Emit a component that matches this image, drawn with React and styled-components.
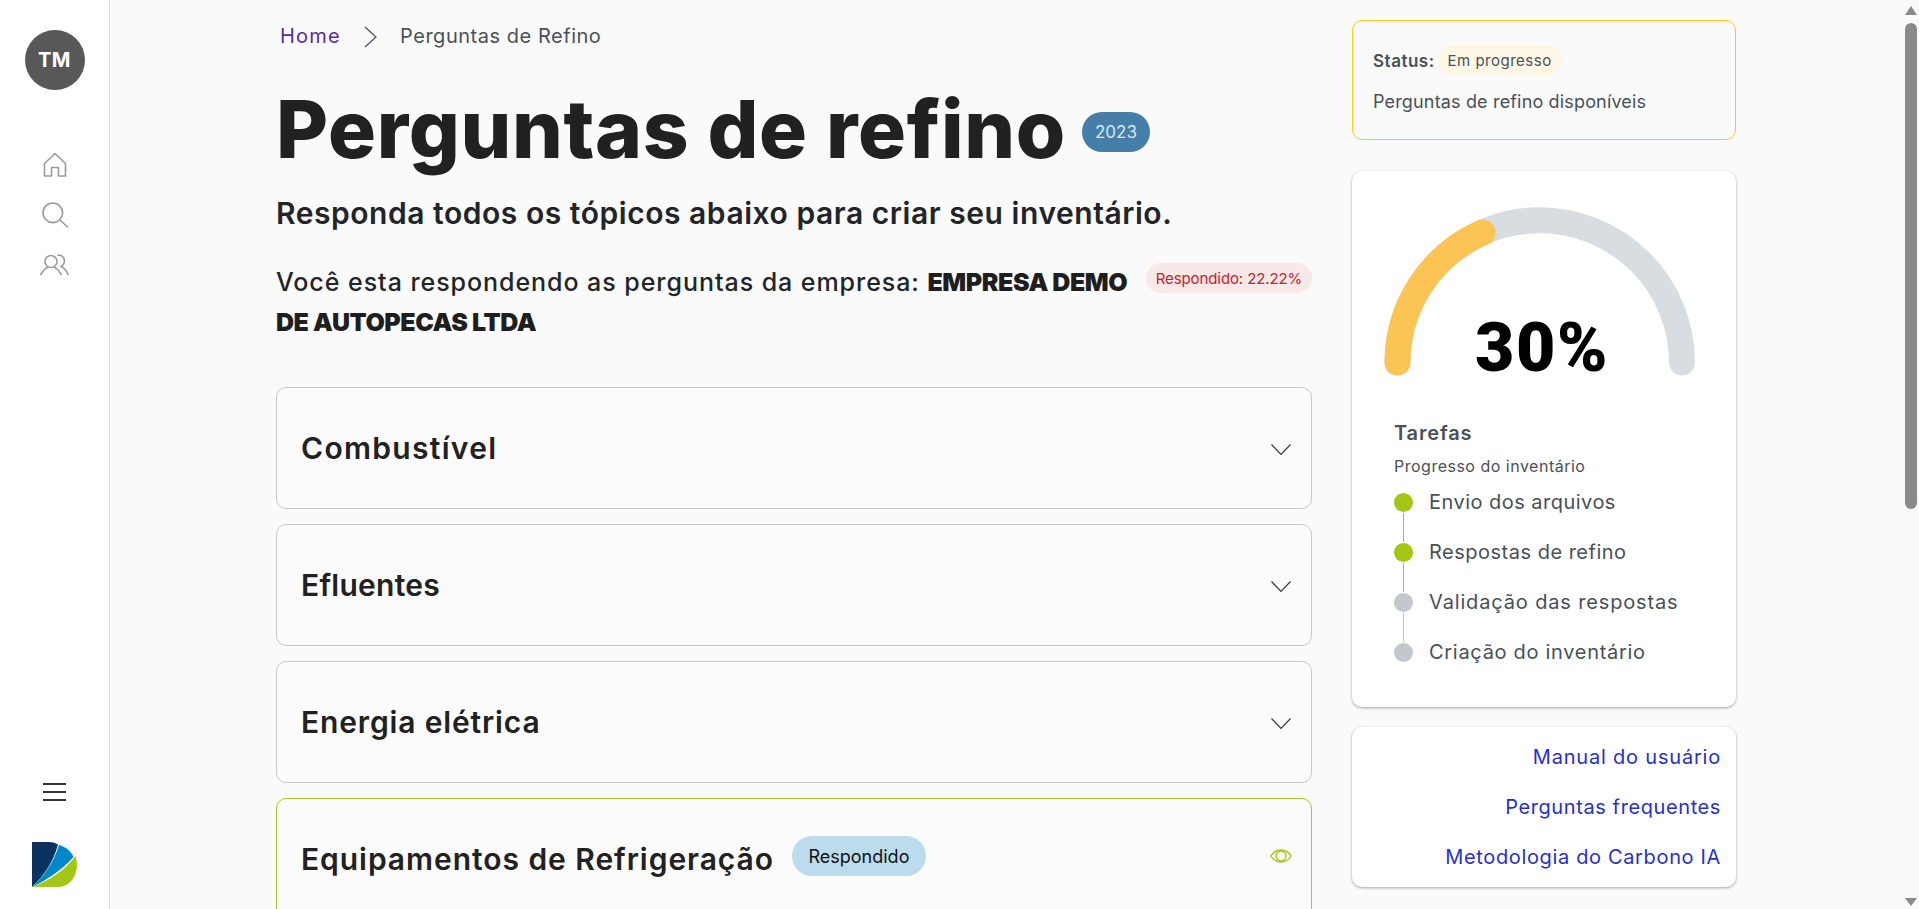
import React from "react";
import styled, { createGlobalStyle } from "styled-components";

const Global = createGlobalStyle`
  * { box-sizing: border-box; }
  html, body { margin: 0; height: 100%; overflow: hidden; }
  body { font-family: Inter, "Noto Sans", "Liberation Sans", sans-serif; background: #fafafa; color: #212121; }
`;

const Page = styled.div`display: flex; height: 909px; overflow: hidden; background: #fafafa;`;

const Sidebar = styled.nav`
  width: 110px; flex: none; height: 100%; background: #fff; border-right: 1px solid #dcdcdc;
  display: flex; flex-direction: column; align-items: center; padding: 30px 0 22px;
`;
const Avatar = styled.div`
  width: 60px; height: 60px; border-radius: 50%; background: #585858; color: #fff;
  font-weight: 700; font-size: 20px; letter-spacing: 0.5px; display: flex; align-items: center; justify-content: center;
`;
const NavIcons = styled.div`display: flex; flex-direction: column; align-items: center; gap: 20px; margin-top: 60px;`;
const NavIcon = styled.svg`display: block; width: 30px; height: 30px; fill: none; stroke: #9a9a9a; stroke-width: 1.6; stroke-linecap: round; stroke-linejoin: round;`;
const SidebarBottom = styled.div`margin-top: auto; display: flex; flex-direction: column; align-items: center; gap: 41px;`;
const Burger = styled.div`
  width: 23px; height: 18px; display: flex; flex-direction: column; justify-content: space-between;
  margin-left: -1px;
  span { display: block; height: 2px; background: #333; }
`;

const Content = styled.main`flex: 1; min-width: 0; display: flex; gap: 40px; padding-left: 166px; align-items: flex-start;`;
const LeftCol = styled.section`width: 1036px; flex: none; padding-top: 20px;`;
const Breadcrumb = styled.div`display: flex; align-items: center; height: 32px; padding-left: 4px; font-size: 20px; color: #495057;`;
const Crumb = styled.a`color: #5b2a9d; letter-spacing: 1.2px; width: 60px;`;
const CrumbSep = styled.svg`width: 14px; height: 22px; margin: 1px 22px 0 24px; fill: none; stroke: #495057; stroke-width: 1.2;`;
const CrumbCurrent = styled.span`letter-spacing: 0.53px;`;

const TitleRow = styled.div`display: flex; align-items: center; margin-top: 27px; height: 100px;`;
const Title = styled.h1`margin: 0; font-size: 80px; line-height: 100px; font-weight: 800; letter-spacing: 0.65px; color: #212121;`;
const YearBadge = styled.span`
  margin-left: 16px; margin-top: 6px; width: 68px; height: 40px; border-radius: 20px; background: #457fa9; color: #d6e6f2;
  font-size: 17px; display: flex; align-items: center; justify-content: center;
`;
const Subtitle = styled.h2`margin: 12px 0 0; font-size: 30px; line-height: 44px; font-weight: 600; color: #212529; letter-spacing: 0.54px;`;
const CompanyRow = styled.div`display: flex; align-items: flex-start; justify-content: space-between; margin-top: 27px;`;
const CompanyText = styled.p`margin: 0; width: 860px; font-size: 25px; line-height: 40px; font-weight: 550; color: #212529; letter-spacing: 0.95px;`;
const CompanyName = styled.strong`font-weight: 900; letter-spacing: -0.45px; color: #1e1e1e;`;
const ProgressPill = styled.span`
  width: 166px; height: 30px; margin-top: 1px; border-radius: 15px; background: #f8e8e8; color: #c0242c;
  font-size: 15px; letter-spacing: -0.1px; display: flex; align-items: center; justify-content: center; white-space: nowrap;
`;

const Accordions = styled.div`display: flex; flex-direction: column; gap: 15px; margin-top: 45px;`;
const Accordion = styled.article`
  height: 122px; flex: none; border: 1px solid ${p => (p.$done ? "#a9c72a" : "#c8c8c8")}; border-radius: 10px;
  display: flex; align-items: center; padding: 0 19px 0 24px; background: #fbfbfb;
`;
const AccordionTitle = styled.h3`margin: 0; font-size: 30px; font-weight: 600; color: #212121; letter-spacing: ${p => p.$spacing}px;`;
const AnsweredPill = styled.span`
  margin: -6px 0 0 18px; width: 134px; height: 40px; border-radius: 20px; background: #bcdcee; color: #111;
  font-size: 18px; display: flex; align-items: center; justify-content: center;
`;
const AccordionIcon = styled.svg`margin-left: auto; margin-top: ${p => p.$shift}px; width: 22px; height: 14px; fill: none; flex: none;`;

const RightCol = styled.aside`width: 384px; flex: none; padding-top: 20px; display: flex; flex-direction: column;`;
const StatusCard = styled.div`height: 120px; border: 1.5px solid #ffc61a; border-radius: 10px; padding: 24px 20px 0;`;
const StatusLine = styled.div`display: flex; align-items: center; height: 31px;`;
const StatusLabel = styled.strong`font-size: 17px; font-weight: 600; color: #495057; letter-spacing: 0.5px;`;
const StatusPill = styled.span`
  margin-left: 3px; width: 124px; height: 31px; border-radius: 16px; background: #fff8e7; color: #495057;
  font-size: 15px; letter-spacing: 0.5px; display: flex; align-items: center; justify-content: center;
`;
const StatusText = styled.p`margin: 12px 0 0; font-size: 18px; line-height: 28px; color: #495057; white-space: nowrap; letter-spacing: 0.16px;`;

const WhiteCard = styled.div`background: #fff; border-radius: 10px; box-shadow: 0 1px 3px rgba(0,0,0,.35);`;
const GaugeCard = styled(WhiteCard)`margin-top: 31px; height: 536px; padding-top: 36px;`;
const GaugeWrap = styled.div`position: relative; width: 313px; height: 169px; margin-left: 32px;`;
const GaugeSvg = styled.svg`display: block; width: 313px; height: 169px; fill: none;`;
const GaugeValue = styled.div`
  position: absolute; left: 0; right: 0; bottom: -8px; text-align: center; font-family: Roboto, sans-serif;
  font-size: 68px; line-height: 72px; font-weight: 900; color: #000; letter-spacing: 1.5px; margin-left: 3px;
`;
const Tasks = styled.div`padding: 44px 0 0 42px;`;
const TasksTitle = styled.h4`margin: 0; font-size: 20px; line-height: 26px; font-weight: 600; color: #495057; letter-spacing: 0.85px;`;
const TasksSub = styled.p`margin: 8px 0 0; font-size: 16px; line-height: 24px; color: #495057; letter-spacing: 0.5px;`;
const Steps = styled.ol`list-style: none; margin: -1px 0 0; padding: 0;`;
const Step = styled.li`
  position: relative; display: flex; align-items: center; height: 50px; font-size: 20px; color: #495057;
  letter-spacing: ${p => p.$spacing}px;
  &:not(:last-child)::after {
    content: ""; position: absolute; left: 9px; top: 36px; width: 1px; height: 29px;
    background: ${p => (p.$done ? "#a4c614" : "#c6c6c6")};
  }
`;
const Dot = styled.span`width: 19px; height: 19px; border-radius: 50%; margin-right: 16px; flex: none; background: ${p => (p.$done ? "#a4c614" : "#c2c8ce")};`;
const LinksCard = styled(WhiteCard)`margin-top: 20px; height: 160px; padding: 5px 15px 0 0; display: flex; flex-direction: column; align-items: flex-end;`;
const DocLink = styled.a`height: 50px; display: flex; align-items: center; font-size: 20px; color: #2731c5; letter-spacing: ${p => p.$spacing}px;`;

const ScrollTrack = styled.div`width: 17px; flex: none; height: 100%; display: flex; flex-direction: column; align-items: center; padding: 6px 0 3px 1px; background: #f9f9f9;`;
const ScrollArrow = styled.div`
  width: 0; height: 0; border-left: 6.5px solid transparent; border-right: 6.5px solid transparent;
  ${p => (p.$down ? "border-top: 8px solid #8a8a8a;" : "border-bottom: 9px solid #8a8a8a;")}
`;
const ScrollThumb = styled.div`width: 12px; height: 486px; margin-top: 8px; margin-bottom: auto; border-radius: 6px; background: #8a8a8a;`;

const Chevron = () => (
  <AccordionIcon $shift={3} viewBox="0 0 22 14"><path d="M1.5 1.500 11 11.500 20.500 1.500" stroke="#333" strokeWidth="1.1" /></AccordionIcon>
);
const Eye = () => (
  <AccordionIcon $shift={-7} viewBox="0 0 22 14">
    <path d="M.8 7C3.500 3 7 1 11 1s7.500 2 10.200 6C18.500 11 15 13 11 13S3.500 11 .8 7Z" stroke="#a4c614" strokeWidth="1.3" />
    <circle cx="11" cy="7" r="5" stroke="#a4c614" strokeWidth="1.3" />
  </AccordionIcon>
);

const topics = [["Combustível", 1.3], ["Efluentes", 0.25], ["Energia elétrica", 0.85]];
const steps = [
  ["Envio dos arquivos", true, 0.47],
  ["Respostas de refino", true, 0.5],
  ["Validação das respostas", false, 0.85],
  ["Criação do inventário", false, 0.7],
];
const links = [["Manual do usuário", 0.8], ["Perguntas frequentes", 0.6], ["Metodologia do Carbono IA", 0.65]];

export default function App() {
  return (
    <Page>
      <Global />
      <Sidebar>
        <Avatar>TM</Avatar>
        <NavIcons>
          <NavIcon viewBox="0 0 30 30"><path d="M4.500 13.500 15 3.500l10.500 10V26h-7v-8.500h-7V26h-7Z" /></NavIcon>
          <NavIcon viewBox="0 0 30 30"><circle cx="12.800" cy="12.800" r="9.800" /><path d="m20 20 7.500 7" /></NavIcon>
          <NavIcon viewBox="0 0 30 30">
            <circle cx="11" cy="11.500" r="6" /><path d="M.8 24.500c2-3.600 4.800-6.500 7-7.300M21.200 24.500c-2-3.600-4.800-6.500-7-7.300" />
            <path d="M18 5.400c3.400-.6 6.400 1.600 6.400 5.300 0 2.600-1.400 4.800-3.600 5.800 2.800.8 5.400 3.800 7.400 8" />
          </NavIcon>
        </NavIcons>
        <SidebarBottom>
          <Burger><span /><span /><span /></Burger>
          <svg width="45" height="45" viewBox="0 0 45 45">
            <path fill="#0a3360" d="M0 0h17c3.500 0 6 .8 9 2.500C22 18 13 33 0 45Z" />
            <path fill="#0087c9" d="M27 3c7 2 12 6 14.500 12C30 28 15 38 0 45 13 33 22 19 27 3Z" />
            <path fill="#a4c614" d="M43.500 14C45.500 20 45.500 27 43 33c-3 7-9 12-17 12H0c17-6 33-17 43.500-31Z" />
          </svg>
        </SidebarBottom>
      </Sidebar>

      <Content>
        <LeftCol>
          <Breadcrumb>
            <Crumb>Home</Crumb>
            <CrumbSep viewBox="0 0 14 22"><path d="M1 1l11 10L1 21" /></CrumbSep>
            <CrumbCurrent>Perguntas de Refino</CrumbCurrent>
          </Breadcrumb>
          <TitleRow>
            <Title>Perguntas de refino</Title>
            <YearBadge>2023</YearBadge>
          </TitleRow>
          <Subtitle>Responda todos os tópicos abaixo para criar seu inventário.</Subtitle>
          <CompanyRow>
            <CompanyText>Você esta respondendo as perguntas da empresa: <CompanyName>EMPRESA DEMO DE AUTOPECAS LTDA</CompanyName></CompanyText>
            <ProgressPill>Respondido: 22.22%</ProgressPill>
          </CompanyRow>
          <Accordions>
            {topics.map(([t, s]) => (
              <Accordion key={t}><AccordionTitle $spacing={s}>{t}</AccordionTitle><Chevron /></Accordion>
            ))}
            <Accordion $done>
              <AccordionTitle $spacing={0.95}>Equipamentos de Refrigeração</AccordionTitle>
              <AnsweredPill>Respondido</AnsweredPill>
              <Eye />
            </Accordion>
          </Accordions>
        </LeftCol>

        <RightCol>
          <StatusCard>
            <StatusLine><StatusLabel>Status:</StatusLabel><StatusPill>Em progresso</StatusPill></StatusLine>
            <StatusText>Perguntas de refino disponíveis</StatusText>
          </StatusCard>
          <GaugeCard>
            <GaugeWrap>
              <GaugeSvg viewBox="0 0 313 169">
                <path d="M13.500 155.500A142.250 142.250 0 0 1 298 155.500" stroke="#d8dde2" strokeWidth="26" strokeLinecap="round" />
                <path d="M13.500 155.500A142.250 142.250 0 0 1 98.500 25.500" stroke="#fbc454" strokeWidth="26" strokeLinecap="round" />
              </GaugeSvg>
              <GaugeValue>30%</GaugeValue>
            </GaugeWrap>
            <Tasks>
              <TasksTitle>Tarefas</TasksTitle>
              <TasksSub>Progresso do inventário</TasksSub>
              <Steps>
                {steps.map(([label, done, s]) => (
                  <Step key={label} $done={done} $spacing={s}><Dot $done={done} />{label}</Step>
                ))}
              </Steps>
            </Tasks>
          </GaugeCard>
          <LinksCard>
            {links.map(([l, s]) => <DocLink key={l} $spacing={s}>{l}</DocLink>)}
          </LinksCard>
        </RightCol>
      </Content>

      <ScrollTrack>
        <ScrollArrow />
        <ScrollThumb />
        <ScrollArrow $down />
      </ScrollTrack>
    </Page>
  );
}
